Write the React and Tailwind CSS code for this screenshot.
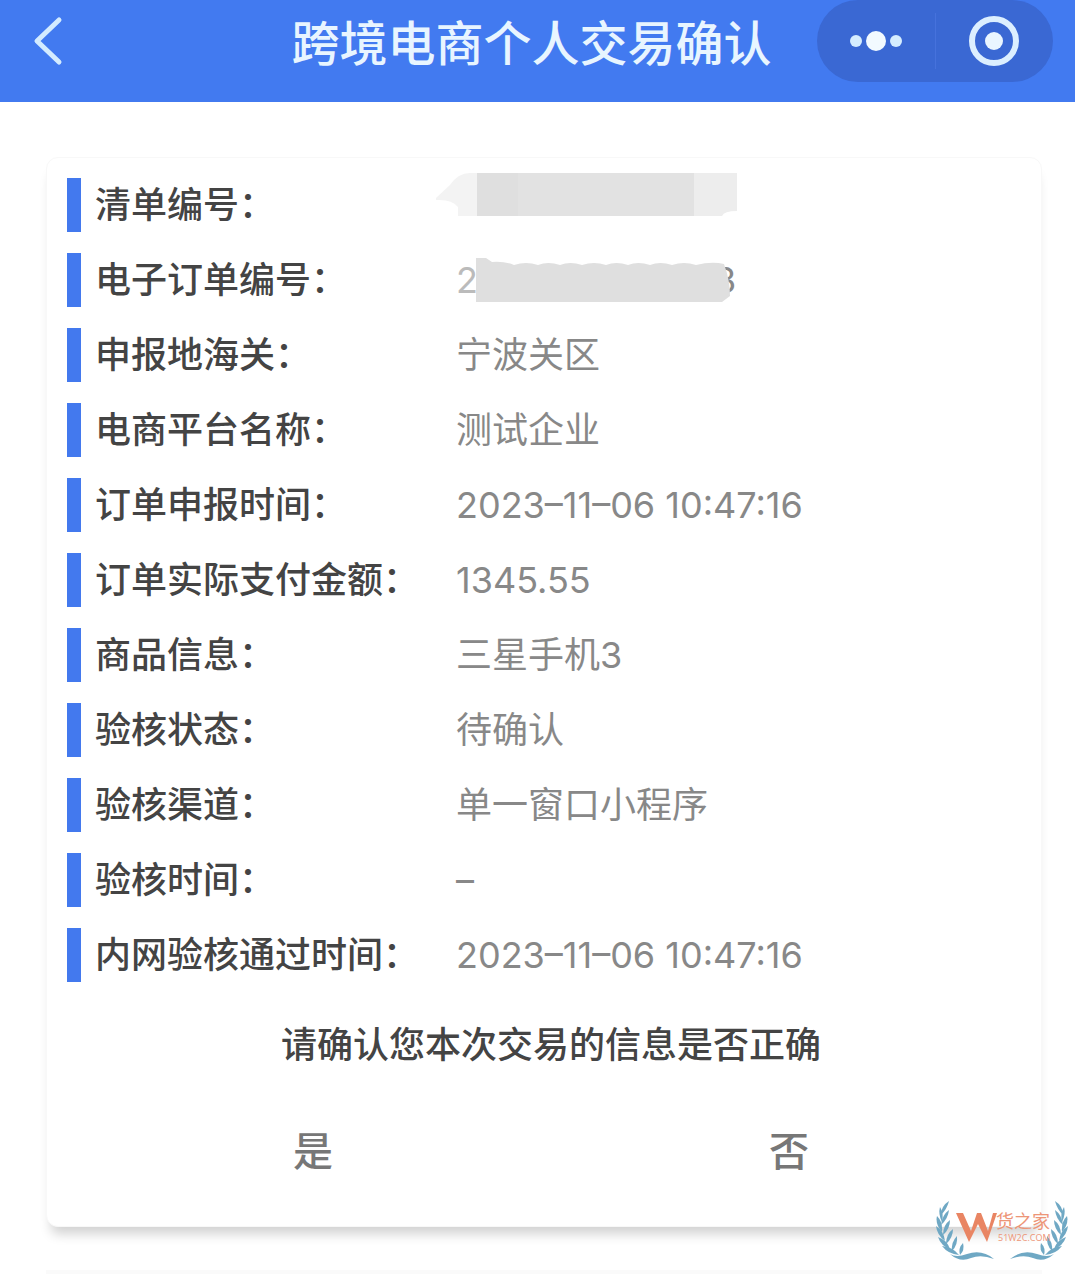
import { useState } from "react";

const rows = [
  { label: "清单编号", value: <MaskedNumber /> },
  { label: "电子订单编号", value: <MaskedOrder /> },
  { label: "申报地海关", value: "宁波关区" },
  { label: "电商平台名称", value: "测试企业" },
  { label: "订单申报时间", value: "2023–11–06 10:47:16" },
  { label: "订单实际支付金额", value: "1345.55" },
  { label: "商品信息", value: "三星手机3" },
  { label: "验核状态", value: "待确认" },
  { label: "验核渠道", value: "单一窗口小程序" },
  { label: "验核时间", value: "–" },
  { label: "内网验核通过时间", value: "2023–11–06 10:47:16" },
];

function MaskedNumber() {
  return (
    <svg className="-ml-5 mb-5 h-11 w-[301px]" viewBox="0 0 301 44" aria-label="已隐藏">
      <path d="M0 25 L14 12 Q22 0 34 0 H41 V43 H22 V34 Q16 26 0 27 Z" fill="#f3f3f3" />
      <path d="M41 0 H258 V43 H41 Z" fill="#e2e2e2" />
      <path d="M41 0 H82 V43 H41 Z" fill="#dfdfdf" />
      <path d="M258 0 H301 V38 Q288 38 286 43 H258 Z" fill="#ededed" />
    </svg>
  );
}

function MaskedOrder() {
  return (
    <span className="flex items-center">
      <span className="w-5 text-[#bbb]">2</span>
      <svg className="z-10 h-11 w-[254px]" viewBox="0 0 254 44" aria-label="已隐藏">
        <path
          d="M0 0 H10 L16 4 Q28 3 38 7 Q50 3 62 7 Q72 3 84 7 Q94 3 106 7 Q118 3 130 7 Q140 3 152 7 Q162 3 174 7 Q184 3 196 7 Q208 3 220 7 Q236 3 248 6 Q254 22 254 38 L246 44 H0 Z"
          fill="#dfdfdf"
        />
      </svg>
      <span className="-ml-4 text-[#888]">3</span>
    </span>
  );
}

function Header() {
  return (
    <header className="mr-[5px] grid h-[102px] grid-cols-[1fr_auto_1fr] bg-[#427af0] text-white">
      <button type="button" aria-label="返回" className="mt-4 ml-8 h-[50px] w-8">
        <svg viewBox="0 0 32 50" className="h-full w-full" fill="none" stroke="#d3ebff" strokeWidth="5" strokeLinecap="round" strokeLinejoin="round">
          <path d="M27 4 L5 25 L27 46" />
        </svg>
      </button>
      <h1 className="mt-[10px] mr-3 text-[48px] leading-[68px] font-medium text-[#e8f5ff]">跨境电商个人交易确认</h1>
      <div className="mr-[22px] flex h-[82px] w-[236px] items-center justify-self-end rounded-[41px] bg-[#3a68d3]">
        <button type="button" aria-label="更多" className="flex h-full flex-1 items-center justify-center gap-1">
          <span className="h-3 w-3 rounded-full bg-[#d5edff]" />
          <span className="h-5 w-5 rounded-full bg-[#f2faff]" />
          <span className="h-3 w-3 rounded-full bg-[#d5edff]" />
        </button>
        <span className="h-14 w-px bg-[#4672dc]" />
        <button type="button" aria-label="关闭" className="flex h-full flex-1 items-center justify-center">
          <span className="flex h-[50px] w-[50px] items-center justify-center rounded-full border-[6px] border-[#dcefff]">
            <span className="h-[18px] w-[18px] rounded-full bg-[#eaf6ff]" />
          </span>
        </button>
      </div>
    </header>
  );
}

// left half of the laurel, mirrored for the right half
function Branch() {
  return (
    <g fill="#6fa8c4">
      <path d="M13 1 Q5 6 5 15 Q11 9 13 1 Z" />
      <path d="M4 7 Q2 14 6 22 Q8 13 4 7 Z" />
      <path d="M13 10 Q6 15 5 25 Q12 19 13 10 Z" />
      <path d="M1 16 Q-1 24 6 32 Q7 22 1 16 Z" />
      <path d="M14 20 Q7 25 7 35 Q14 29 14 20 Z" />
      <path d="M0 26 Q1 35 9 41 Q8 31 0 26 Z" />
      <path d="M17 29 Q10 34 10 44 Q17 38 17 29 Z" />
      <path d="M2 37 Q5 46 14 49 Q11 40 2 37 Z" />
      <path d="M21 36 Q15 42 16 51 Q22 45 21 36 Z" />
      <path d="M6 46 Q12 54 23 55 Q17 47 6 46 Z" />
      <path d="M27 43 Q22 48 24 55 Q29 50 27 43 Z" />
      <path d="M14 54 Q20 58 31 54 Q46 49 58 59 Q45 54 35 58 Q24 63 14 54 Z" />
    </g>
  );
}

function Watermark() {
  return (
    <div className="absolute right-3 bottom-3 h-[62px] w-[132px]">
      <svg viewBox="0 0 132 62" className="absolute inset-0 h-full w-full" aria-hidden="true">
        <Branch />
        <g transform="translate(132 0) scale(-1 1)">
          <Branch />
        </g>
        <path d="M20 13 H27 L35 31 L41 13 H45 L52 31 L57 13 H61 L51 42 L42 24 L33 42 Z" fill="#e98563" />
      </svg>
      <div className="absolute top-3 left-[60px] text-[#ed9577]">
        <div className="text-[18px] leading-5">货之家</div>
        <div className="ml-[2px] font-['Open_Sans',sans-serif] text-[9px] leading-3">51W2C.COM</div>
      </div>
    </div>
  );
}

export default function App() {
  const [answer, setAnswer] = useState(null);

  return (
    <div className="relative min-h-screen overflow-hidden bg-white font-['Inter','Noto_Sans_CJK_SC',sans-serif]">
      <Header />
      <main className="mt-[55px] mr-[38px] ml-[46px] rounded-xl border border-[#f8f8f8] bg-white pt-[9px] pr-[6px] pb-11 pl-5 shadow-[0_12px_12px_-5px_rgba(0,0,0,0.18)]">
        <dl>
          {rows.map((row) => (
            <div key={row.label} className="flex h-[75px] items-center">
              <dt className="flex w-[389px] shrink-0 items-center text-[36px] font-medium text-[#444]">
                <span className="mr-[14px] h-[54px] w-[14px] bg-[#4379ee]" />
                {row.label}：
              </dt>
              <dd className="text-[36px] text-[#888]">{row.value}</dd>
            </div>
          ))}
        </dl>
        <p className="mt-[26px] text-center text-[36px] leading-[54px] font-medium text-[#444]">请确认您本次交易的信息是否正确</p>
        <div className="mt-[50px] grid grid-cols-2 px-2 text-[40px] leading-[60px] font-medium text-[#777]">
          <button type="button" aria-pressed={answer === "yes"} onClick={() => setAnswer("yes")}>
            是
          </button>
          <button type="button" aria-pressed={answer === "no"} onClick={() => setAnswer("no")}>
            否
          </button>
        </div>
      </main>
      <div className="mt-[43px] mr-[38px] ml-[46px] h-1 bg-[#fafafa]" />
      <Watermark />
    </div>
  );
}
